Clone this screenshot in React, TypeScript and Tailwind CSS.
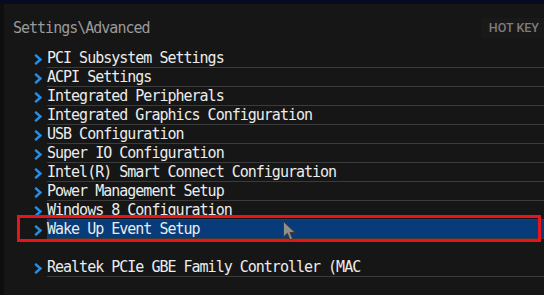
import React from "react";

const items = [
  "PCI Subsystem Settings",
  "ACPI Settings",
  "Integrated Peripherals",
  "Integrated Graphics Configuration",
  "USB Configuration",
  "Super IO Configuration",
  "Intel(R) Smart Connect Configuration",
  "Power Management Setup",
  "Windows 8 Configuration",
  "Wake Up Event Setup",
];

const mono = { fontFamily: '"DejaVu Sans Mono", "Liberation Mono", monospace' };

function Chevron() {
  return (
    <svg width="8" height="11" viewBox="0 0 8 11" className="mt-[1px]">
      <polyline
        points="1.2,0.8 6.4,5.5 1.2,10.2"
        fill="none"
        stroke="#2290ea"
        strokeWidth="2.4"
        strokeLinejoin="miter"
      />
    </svg>
  );
}

function Row({ label, active }: { label: string; active?: boolean }) {
  return (
    <div className="flex h-[19px]">
      <div className="w-[43px] flex items-center pl-[30px]">
        <Chevron />
      </div>
      <div
        className={`flex-1 h-[19px] pt-[1px] border-b border-[#3b3b3b] leading-[17px] text-[15px] tracking-[-1px] text-[#ececec] whitespace-nowrap ${
          active ? "bg-[#073b7a]" : ""
        }`}
        style={mono}
      >
        {label}
      </div>
    </div>
  );
}

export default function App() {
  return (
    <div className="relative w-[544px] h-[295px] overflow-hidden bg-[#161616] flex flex-col">
      <div className="h-[4px] bg-[#070a22] shrink-0" />
      <div className="flex flex-1">
        <div className="w-[4px] bg-[#0e0e0e] shrink-0" />
        <div className="flex-1 flex flex-col">
          <div className="flex justify-between items-start h-[45px] pt-[15px]">
            <div
              className="pl-[9px] leading-[19px] text-[15px] tracking-[-1px] text-[#9a9a9a]"
              style={mono}
            >
              Settings\Advanced
            </div>
            <div
              className="mt-[-1px] h-[20px] pl-[8px] pr-[5px] bg-[#191919] text-[12.5px] font-medium leading-[20px] text-[#7d7d7d]"
              style={{ fontFamily: 'Roboto, "Liberation Sans", sans-serif' }}
            >
              HOT KEY
            </div>
          </div>
          {items.map((it, i) => (
            <Row key={it} label={it} active={i === items.length - 1} />
          ))}
          <div className="h-[19px]" />
          <Row label="Realtek PCIe GBE Family Controller (MAC" />
        </div>
      </div>
      <div className="absolute left-[17px] top-[215px] w-[524px] h-[27px] border-[3px] border-[#e8141c]" />
      <svg
        className="absolute left-[283px] top-[221px]"
        width="14"
        height="21"
        viewBox="0 0 14 21"
      >
        <path
          d="M0.5,0.5 L0.5,16 L4.3,12.3 L7,19 L9.6,18 L7,11.5 L12,11.5 Z"
          fill="#8e8e8e"
          stroke="#3c3c3c"
          strokeWidth="1"
        />
      </svg>
    </div>
  );
}
